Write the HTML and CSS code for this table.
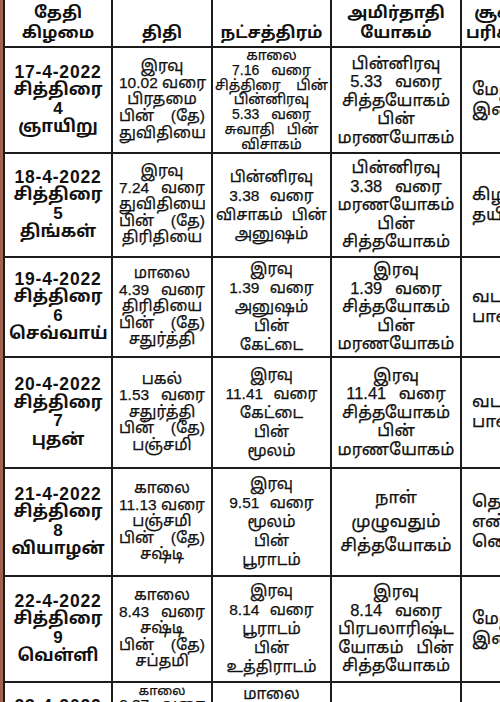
FILE: index.html
```html
<!DOCTYPE html>
<html lang="ta">
<head>
<meta charset="utf-8">
<title>பஞ்சாங்கம்</title>
<link rel="stylesheet" href="styles.css">
</head>
<body>
<div class="edge"></div>
<table class="tbl">
  <colgroup>
    <col class="c1"><col class="c2"><col class="c3"><col class="c4"><col class="c5">
  </colgroup>
  <thead>
    <tr class="hd">
      <th><div>தேதி</div><div>கிழமை</div></th>
      <th><div>திதி</div></th>
      <th><div>நட்சத்திரம்</div></th>
      <th><div>அமிர்தாதி</div><div>யோகம்</div></th>
      <th><div>சூலம்</div><div>பரிகாரம்</div></th>
    </tr>
  </thead>
  <tbody>
    <tr class="r1">
      <td class="date"><div class="dn">17-4-2022</div><div>சித்திரை</div><div>4</div><div>ஞாயிறு</div></td>
      <td class="tithi"><div>இரவு</div><div class="j">10.02 வரை</div><div>பிரதமை</div><div class="j">பின் (தே)</div><div>துவிதியை</div></td>
      <td class="star small"><div>காலை</div><div>7.16 வரை</div><div class="j">சித்திரை பின்</div><div>பின்னிரவு</div><div>5.33 வரை</div><div>சுவாதி பின்</div><div>விசாகம்</div></td>
      <td class="yoga"><div>பின்னிரவு</div><div>5.33 வரை</div><div>சித்தயோகம்</div><div>பின்</div><div>மரணயோகம்</div></td>
      <td class="sool"><div>மேற்கு</div><div>இனிப்பு</div></td>
    </tr>
    <tr class="r2">
      <td class="date"><div class="dn">18-4-2022</div><div>சித்திரை</div><div>5</div><div>திங்கள்</div></td>
      <td class="tithi"><div>இரவு</div><div class="j">7.24 வரை</div><div>துவிதியை</div><div class="j">பின் (தே)</div><div>திரிதியை</div></td>
      <td class="star"><div>பின்னிரவு</div><div>3.38 வரை</div><div class="j">விசாகம் பின்</div><div>அனுஷம்</div></td>
      <td class="yoga"><div>பின்னிரவு</div><div>3.38 வரை</div><div>மரணயோகம்</div><div>பின்</div><div>சித்தயோகம்</div></td>
      <td class="sool"><div>கிழக்கு</div><div>தயிர்</div></td>
    </tr>
    <tr class="r3">
      <td class="date"><div class="dn">19-4-2022</div><div>சித்திரை</div><div>6</div><div>செவ்வாய்</div></td>
      <td class="tithi"><div>மாலை</div><div class="j">4.39 வரை</div><div>திரிதியை</div><div class="j">பின் (தே)</div><div>சதுர்த்தி</div></td>
      <td class="star"><div>இரவு</div><div>1.39 வரை</div><div>அனுஷம்</div><div>பின்</div><div>கேட்டை</div></td>
      <td class="yoga"><div>இரவு</div><div>1.39 வரை</div><div>சித்தயோகம்</div><div>பின்</div><div>மரணயோகம்</div></td>
      <td class="sool"><div>வடக்கு</div><div>பால்</div></td>
    </tr>
    <tr class="r4">
      <td class="date"><div class="dn">20-4-2022</div><div>சித்திரை</div><div>7</div><div>புதன்</div></td>
      <td class="tithi"><div>பகல்</div><div class="j">1.53 வரை</div><div>சதுர்த்தி</div><div class="j">பின் (தே)</div><div>பஞ்சமி</div></td>
      <td class="star"><div>இரவு</div><div>11.41 வரை</div><div>கேட்டை</div><div>பின்</div><div>மூலம்</div></td>
      <td class="yoga"><div>இரவு</div><div>11.41 வரை</div><div>சித்தயோகம்</div><div>பின்</div><div>மரணயோகம்</div></td>
      <td class="sool"><div>வடக்கு</div><div>பால்</div></td>
    </tr>
    <tr class="r5">
      <td class="date"><div class="dn">21-4-2022</div><div>சித்திரை</div><div>8</div><div>வியாழன்</div></td>
      <td class="tithi"><div>காலை</div><div class="j">11.13 வரை</div><div>பஞ்சமி</div><div class="j">பின் (தே)</div><div>சஷ்டி</div></td>
      <td class="star"><div>இரவு</div><div>9.51 வரை</div><div>மூலம்</div><div>பின்</div><div>பூராடம்</div></td>
      <td class="yoga big"><div>நாள்</div><div>முழுவதும்</div><div>சித்தயோகம்</div></td>
      <td class="sool"><div>தெற்கு</div><div>எண்</div><div>ணெய்</div></td>
    </tr>
    <tr class="r6">
      <td class="date"><div class="dn">22-4-2022</div><div>சித்திரை</div><div>9</div><div>வெள்ளி</div></td>
      <td class="tithi"><div>காலை</div><div class="j">8.43 வரை</div><div>சஷ்டி</div><div class="j">பின் (தே)</div><div>சப்தமி</div></td>
      <td class="star"><div>இரவு</div><div>8.14 வரை</div><div>பூராடம்</div><div>பின்</div><div>உத்திராடம்</div></td>
      <td class="yoga"><div>இரவு</div><div>8.14 வரை</div><div>பிரபலாரிஷ்ட</div><div>யோகம் பின்</div><div>சித்தயோகம்</div></td>
      <td class="sool"><div>மேற்கு</div><div>இனிப்பு</div></td>
    </tr>
    <tr class="r7">
      <td class="date"><div class="dn">23-4-2022</div><div>சித்திரை</div><div>10</div><div>சனி</div></td>
      <td class="tithi top"><div class="sm">காலை</div><div class="j">6.37 வரை</div><div>சப்தமி</div><div class="j">பின் (தே)</div><div>அஷ்டமி</div></td>
      <td class="star top"><div>மாலை</div><div>6.21 வரை</div><div>உத்திராடம்</div><div>பின்</div><div>திருவோணம்</div></td>
      <td class="yoga"><div>மாலை</div><div>6.21 வரை</div><div>மரணயோகம்</div></td>
      <td class="sool"><div>கிழக்கு</div><div>தயிர்</div></td>
    </tr>
  </tbody>
</table>
</body>
</html>
```
FILE: styles.css
```css
html, body {
  margin: 0;
  padding: 0;
  background: #fff;
  overflow: hidden;
}
body {
  width: 500px;
  height: 702px;
  display: flex;
  align-items: flex-start;
  font-family: "Liberation Sans", "Noto Sans Tamil", "Lohit Tamil", "Noto Sans", sans-serif;
  color: #111;
}
.edge {
  flex: none;
  width: 3px;
  height: 702px;
  background: #a0624e;
}
.tbl {
  flex: none;
  border-collapse: collapse;
  table-layout: fixed;
  width: 540px;
}
.c1 { width: 108px; }
.c2 { width: 100px; }
.c3 { width: 119px; }
.c4 { width: 130px; }
.c5 { width: 83px; }
th, td {
  border: 2px solid #1c1c1c;
  padding: 0 4px;
  text-align: center;
  vertical-align: middle;
  overflow: hidden;
  white-space: nowrap;
}
td {
  -webkit-text-stroke: 0.25px #111;
}
.hd th {
  border-top: none;
  height: 42px;
  font-size: 16.5px;
  font-weight: bold;
  line-height: 20px;
  vertical-align: bottom;
  padding-bottom: 4px;
}
.r1 { height: 103px; }
.r2 { height: 104px; }
.r3 { height: 100px; }
.r4 { height: 111px; }
.r5 { height: 108px; }
.r6 { height: 106px; }
.r7 { height: 104px; }
.date {
  font-size: 17px;
  font-weight: bold;
  line-height: 18.5px;
  -webkit-text-stroke: 0;
}
.dn {
  font-size: 17.5px;
  letter-spacing: 0.8px;
}
.tithi {
  font-size: 15.5px;
  line-height: 16.6px;
  padding: 0 6px;
}
.star {
  font-size: 15.5px;
  line-height: 19px;
  padding: 0 3px;
  word-spacing: 6px;
}
.star.small {
  font-size: 14px;
  line-height: 14.8px;
  padding: 0 2px;
  word-spacing: 8px;
}
.yoga {
  font-size: 16.5px;
  line-height: 18.5px;
  word-spacing: 8px;
}
.yoga.big {
  font-size: 17px;
  line-height: 24px;
}
.sool {
  font-size: 17px;
  line-height: 20px;
  text-align: left;
  padding-left: 10px;
}
.j {
  text-align: justify;
  text-align-last: justify;
  word-spacing: 0;
}
.top { vertical-align: top; padding-top: 1px; }
.sm { font-size: 13px; line-height: 13px; }
```
